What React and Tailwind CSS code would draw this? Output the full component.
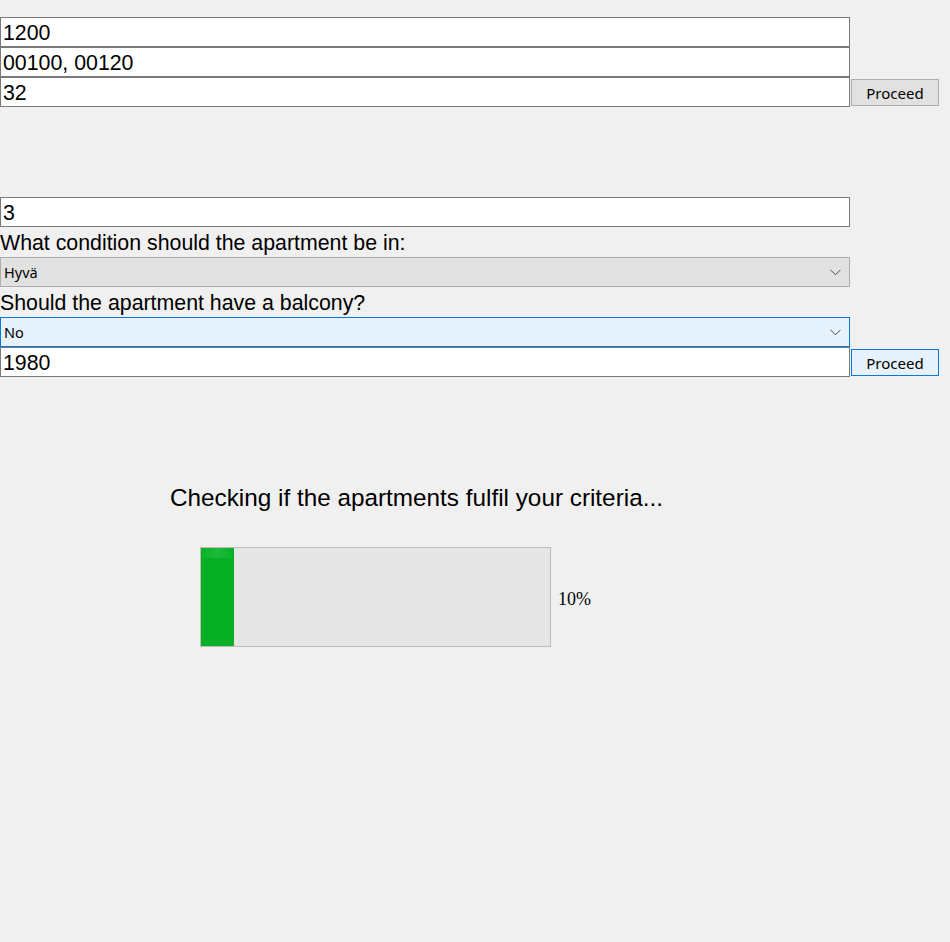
import { useState } from 'react'

const sans = { fontFamily: '"Liberation Sans", Arial, sans-serif' }

function Field({ value }) {
  return (
    <input
      readOnly
      value={value}
      className="block h-[30px] w-[850px] border border-[#7a7a7a] bg-white pl-[2px] pt-[3px] text-[21.33px] text-black outline-none font-['Liberation_Sans',Arial,sans-serif]"
    />
  )
}

function Chevron() {
  return (
    <svg width="11" height="7" viewBox="0 0 11 7" className="shrink-0">
      <path d="M0.5 0.8 L5.5 5.8 L10.5 0.8" fill="none" stroke="#4a4a4a" strokeWidth="1" />
    </svg>
  )
}

function Select({ value, focused }) {
  return (
    <div
      className={
        'flex h-[30px] w-[850px] items-center justify-between border pl-[3px] pr-[8px] pt-[1px] text-[14.5px] text-black font-["Noto_Sans",sans-serif] ' +
        (focused ? 'border-[#0078d7] bg-[#e5f1fb]' : 'border-[#adadad] bg-[#e1e1e1]')
      }
    >
      <span>{value}</span>
      <Chevron />
    </div>
  )
}

function Proceed({ hover }) {
  return (
    <button
      className={
        'ml-px mt-[2px] h-[27px] w-[88px] border pt-[1px] text-[15px] leading-none text-black font-["Noto_Sans",sans-serif] ' +
        (hover ? 'border-[#0078d7] bg-[#e5f1fb]' : 'border-[#adadad] bg-[#e1e1e1]')
      }
    >
      Proceed
    </button>
  )
}

function Label({ children }) {
  return <div className="h-[30px] pt-[1px] text-[21.33px] leading-[30px] text-black" style={sans}>{children}</div>
}

export default function App() {
  const [progress] = useState(10)

  return (
    <div className="min-h-[942px] w-[950px] bg-[#f0f0f0] pt-[17px]" style={sans}>
      <Field value="1200" />
      <Field value="00100, 00120" />
      <div className="flex items-start">
        <Field value="32" />
        <Proceed />
      </div>

      <div className="mt-[90px]">
        <Field value="3" />
        <Label>What condition should the apartment be in:</Label>
        <Select value="Hyvä" />
        <Label>Should the apartment have a balcony?</Label>
        <Select value="No" focused />
        <div className="flex items-start">
          <Field value="1980" />
          <Proceed hover />
        </div>
      </div>

      <div className="mt-[107px] pl-[170px] text-[24.3px] leading-[28px] text-black">Checking if the apartments fulfil your criteria...</div>

      <div className="mt-[35px] flex items-center pl-[200px]">
        <div className="h-[100px] w-[351px] border border-[#bcbcbc] bg-[#e6e6e6]">
          <div className="h-full bg-[#06b025]" style={{ width: (progress / 100) * 349 - 2 + 'px' }}>
            <div className="h-[10px] w-full bg-gradient-to-r from-[#06b025] via-[#2cc24a] to-[#06b025] opacity-60" />
          </div>
        </div>
        <span className="ml-[7px] mt-[4px] text-[18px] text-black font-['Liberation_Serif','Times_New_Roman',serif]">{progress}%</span>
      </div>
    </div>
  )
}
